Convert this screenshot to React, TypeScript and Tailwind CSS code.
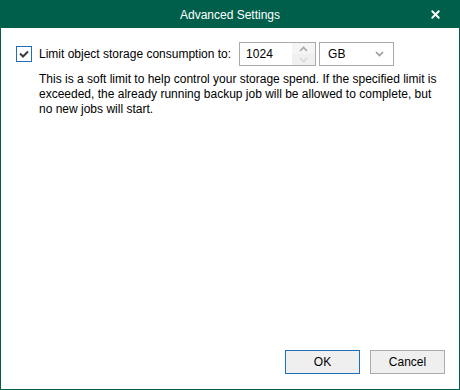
import { X } from "lucide-react";

const font = { fontFamily: '"Liberation Sans", Arial, sans-serif' };

function Chevron({ up = false, color }: { up?: boolean; color: string }) {
  return (
    <svg width="9" height="6" viewBox="0 0 9 6">
      <path
        d={up ? "M1 5 L4.5 1.5 L8 5" : "M1 1 L4.5 4.5 L8 1"}
        fill="none"
        stroke={color}
        strokeWidth="1.6"
      />
    </svg>
  );
}

export default function App() {
  return (
    <div
      className="w-[460px] h-[390px] flex flex-col bg-white border border-[#005f4b] text-[12px] text-black"
      style={font}
    >
      {/* title bar */}
      <div className="h-[27px] bg-[#005f4b] relative flex items-center justify-center text-white text-[12px]">
        Advanced Settings
        <X className="absolute right-[17px] top-[7px] w-[13px] h-[13px]" strokeWidth={3.5} />
      </div>

      <div className="flex-1 flex flex-col pl-[15px] pr-[14px] pb-[15px]">
        <div className="flex items-center mt-[14px] h-[24px]">
          <div className="w-[16px] h-[16px] border border-[#1f6fb8] flex items-center justify-center">
            <svg width="10" height="8" viewBox="0 0 10 8">
              <path d="M1 3.5 L4 6.5 L9 1.5" fill="none" stroke="#3c3c3c" strokeWidth="2" />
            </svg>
          </div>
          <span className="ml-[7px]">Limit object storage consumption to:</span>
          <div className="ml-[8px] w-[77px] h-[24px] border border-[#aaaaaa] flex">
            <span className="flex-1 pl-[6px] leading-[22px]">1024</span>
            <div className="w-[23px] flex flex-col">
              <div className="flex-1 bg-[#f5f5f5] flex items-center justify-center">
                <Chevron up color="#a8a8a8" />
              </div>
              <div className="flex-1 bg-[#f0f0f0] flex items-center justify-center">
                <Chevron color="#d8d8d8" />
              </div>
            </div>
          </div>
          <div className="ml-[3px] w-[75px] h-[24px] border border-[#aaaaaa] flex items-center justify-between pl-[8px] pr-[9px]">
            <span>GB</span>
            <Chevron color="#999" />
          </div>
        </div>

        <p className="ml-[23px] mt-[6px] leading-[15px] whitespace-nowrap">
          This is a soft limit to help control your storage spend. If the specified limit is
          <br />
          exceeded, the already running backup job will be allowed to complete, but
          <br />
          no new jobs will start.
        </p>

        <div className="mt-auto flex justify-end gap-[10px]">
          <button className="w-[75px] h-[24px] bg-[#efefef] border border-[#1f6fb8]">OK</button>
          <button className="w-[75px] h-[24px] bg-[#efefef] border border-[#ababab]">Cancel</button>
        </div>
      </div>
    </div>
  );
}
